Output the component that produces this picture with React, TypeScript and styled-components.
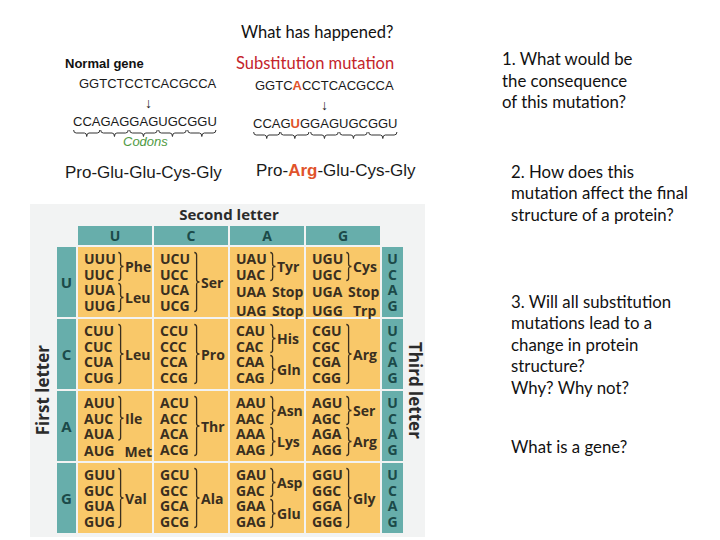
import React from "react";
import styled, { createGlobalStyle } from "styled-components";

const GlobalStyle = createGlobalStyle`
  html, body {
    margin: 0;
    padding: 0;
    background: #ffffff;
  }
  body {
    width: 720px;
    height: 540px;
    overflow: hidden;
    font-family: "Liberation Sans", Arial, sans-serif;
    color: #111;
  }
`;

const LINE = 15.5;
const BASES = ["U", "C", "A", "G"];

// each cell: groups split by "|", codons then ":" amino acid
const CELLS = [
  ["UUU UUC:Phe|UUA UUG:Leu", "UCU UCC UCA UCG:Ser", "UAU UAC:Tyr|UAA:Stop|UAG:Stop", "UGU UGC:Cys|UGA:Stop|UGG:Trp"],
  ["CUU CUC CUA CUG:Leu", "CCU CCC CCA CCG:Pro", "CAU CAC:His|CAA CAG:Gln", "CGU CGC CGA CGG:Arg"],
  ["AUU AUC AUA:Ile|AUG:Met", "ACU ACC ACA ACG:Thr", "AAU AAC:Asn|AAA AAG:Lys", "AGU AGC:Ser|AGA AGG:Arg"],
  ["GUU GUC GUA GUG:Val", "GCU GCC GCA GCG:Ala", "GAU GAC:Asp|GAA GAG:Glu", "GGU GGC GGA GGG:Gly"],
];

const Page = styled.div`
  display: grid;
  grid-template-columns: 502px 1fr;
  height: 540px;
`;

const LeftColumn = styled.div`
  display: flex;
  flex-direction: column;
`;

const Title = styled.div`
  margin: 22px 0 0 241px;
  font-family: Lato, "Open Sans", sans-serif;
  font-size: 16.5px;
  line-height: 20px;
  color: #111;
`;

const GeneRow = styled.div`
  display: flex;
  margin-top: 12px;
`;

const Panel = styled.div<{ $left: number; $width: number }>`
  margin-left: ${(p) => p.$left}px;
  width: ${(p) => p.$width}px;
  display: flex;
  flex-direction: column;
  align-items: flex-start;
`;

const GeneLabel = styled.div`
  font-weight: bold;
  font-size: 13px;
  line-height: 20px;
`;

const MutationLabel = styled.div`
  font-family: Lato, "Open Sans", sans-serif;
  font-size: 16.5px;
  line-height: 18px;
  color: #c4242b;
`;

const Sequence = styled.div<{ $indent: number; $top?: number }>`
  margin: ${(p) => p.$top || 0}px 0 0 ${(p) => p.$indent}px;
  font-size: 13px;
  line-height: 20px;
  color: #1a1a1a;
`;

const Arrow = styled.div<{ $indent: number }>`
  margin-left: ${(p) => p.$indent}px;
  font-size: 14px;
  line-height: 19px;
  color: #222;
`;

const CodonRow = styled.div<{ $indent: number; $top: number }>`
  margin: ${(p) => p.$top}px 0 0 ${(p) => p.$indent}px;
  display: flex;
  font-size: 13px;
  line-height: 16px;
  color: #1a1a1a;
`;

const CodonBox = styled.span`
  position: relative;
  svg {
    position: absolute;
    left: 0;
    top: 100%;
    width: 100%;
    height: 7px;
  }
`;

const CodonsCaption = styled.div<{ $indent: number }>`
  margin: 6px 0 0 ${(p) => p.$indent}px;
  font-size: 13px;
  font-style: italic;
  line-height: 12px;
  color: #4f9a44;
`;

const Protein = styled.div<{ $indent: number; $top: number }>`
  margin: ${(p) => p.$top}px 0 0 ${(p) => p.$indent}px;
  font-size: 17px;
  line-height: 20px;
  color: #1a1a1a;
`;

const Mut = styled.span`
  color: #e1532b;
  font-weight: bold;
`;

const CodeTable = styled.div`
  margin: 21px 0 0 30px;
  width: 395px;
  height: 333px;
  box-sizing: border-box;
  background: #f2f3f3;
  padding-bottom: 4px;
  display: grid;
  grid-template-columns: 25px 19px repeat(4, 74px) 21px 20px;
  grid-template-rows: 20px 19px repeat(4, 70px);
  column-gap: 2px;
  row-gap: 2px;
  font-family: "Open Sans", sans-serif;
  font-weight: 700;
`;

const SecondLetter = styled.div`
  grid-column: 3 / 7;
  grid-row: 1;
  text-align: center;
  font-size: 15px;
  line-height: 20px;
  color: #2b2b2b;
`;

const SideLabel = styled.div<{ $col: number; $flip?: boolean }>`
  grid-column: ${(p) => p.$col};
  grid-row: 3 / 7;
  writing-mode: vertical-rl;
  transform: ${(p) => (p.$flip ? "rotate(180deg)" : "none")};
  align-self: center;
  justify-self: center;
  font-size: 17px;
  line-height: 20px;
  color: #2b2b2b;
`;

const HeaderCell = styled.div<{ $col: number }>`
  grid-column: ${(p) => p.$col};
  grid-row: 2;
  background: #67aeab;
  color: #1b4a49;
  font-size: 14px;
  line-height: 19px;
  text-align: center;
`;

const FirstCell = styled.div<{ $row: number }>`
  grid-column: 2;
  grid-row: ${(p) => p.$row};
  background: #67aeab;
  color: #1b4a49;
  font-size: 15px;
  display: flex;
  align-items: center;
  justify-content: center;
`;

const ThirdCell = styled.div<{ $row: number }>`
  grid-column: 7;
  grid-row: ${(p) => p.$row};
  background: #67aeab;
  color: #1b4a49;
  font-size: 14px;
  line-height: ${LINE}px;
  padding-top: 4px;
  display: flex;
  flex-direction: column;
  align-items: center;
`;

const Cell = styled.div<{ $row: number; $col: number }>`
  grid-column: ${(p) => p.$col};
  grid-row: ${(p) => p.$row};
  background: #f9c869;
  color: #3a2f1f;
  padding: 4px 0 0 6px;
  display: flex;
  flex-direction: column;
`;

const Group = styled.div`
  display: flex;
  align-items: center;
`;

const CodonList = styled.div`
  width: 34px;
  font-size: 14px;
  line-height: ${LINE}px;
`;

const BraceSlot = styled.div<{ $narrow: boolean }>`
  width: ${(p) => (p.$narrow ? 2 : 7)}px;
  display: flex;
  align-items: center;
`;

const AminoName = styled.div`
  font-size: 14px;
  white-space: nowrap;
`;

const Questions = styled.div`
  display: flex;
  flex-direction: column;
  font-family: Lato, "Open Sans", sans-serif;
  font-size: 16.8px;
  line-height: 21.6px;
  color: #111;
`;

const Question = styled.div<{ $top: number; $indent: number }>`
  margin: ${(p) => p.$top}px 0 0 ${(p) => p.$indent}px;
`;

const HBrace = () => (
  <svg viewBox="0 0 30 7" preserveAspectRatio="none">
    <path
      d="M0.7 0 Q0.7 3 3.5 3 L12.5 3 Q15 3 15 6.5 Q15 3 17.5 3 L26.5 3 Q29.3 3 29.3 0"
      fill="none"
      stroke="#333"
      strokeWidth="1"
      vectorEffect="non-scaling-stroke"
    />
  </svg>
);

const VBrace = ({ lines }: { lines: number }) => {
  const h = lines * LINE;
  const m = h / 2;
  return (
    <svg width="6" height={h} viewBox={`0 0 6 ${h}`}>
      <path
        d={`M0.3 1.5 Q2.6 1.5 2.6 4 L2.6 ${m - 2.5} Q2.6 ${m} 5.5 ${m} Q2.6 ${m} 2.6 ${m + 2.5} L2.6 ${h - 4} Q2.6 ${h - 1.5} 0.3 ${h - 1.5}`}
        fill="none"
        stroke="#3a2f1f"
        strokeWidth="1.3"
      />
    </svg>
  );
};

const Codons = ({ codons, mut }: { codons: string[]; mut?: [number, number] }) => (
  <>
    {codons.map((c, i) => (
      <CodonBox key={i}>
        {mut && mut[0] === i
          ? c.split("").map((ch, j) => (j === mut[1] ? <Mut key={j}>{ch}</Mut> : ch))
          : c}
        <HBrace />
      </CodonBox>
    ))}
  </>
);

const TableCell = ({ spec, row, col }: { spec: string; row: number; col: number }) => (
  <Cell $row={row} $col={col}>
    {spec.split("|").map((g, i) => {
      const [list, name] = g.split(":");
      const codons = list.split(" ");
      const single = codons.length === 1;
      return (
        <Group key={i}>
          <CodonList>
            {codons.map((c) => (
              <div key={c}>{c}</div>
            ))}
          </CodonList>
          <BraceSlot $narrow={single && name === "Stop"}>
            {!single && <VBrace lines={codons.length} />}
          </BraceSlot>
          <AminoName>{name}</AminoName>
        </Group>
      );
    })}
  </Cell>
);

export default function App() {
  return (
    <>
      <GlobalStyle />
      <Page>
        <LeftColumn>
          <Title>What has happened?</Title>
          <GeneRow>
            <Panel $left={65} $width={171}>
              <GeneLabel>Normal gene</GeneLabel>
              <Sequence $indent={14}>GGTCTCCTCACGCCA</Sequence>
              <Arrow $indent={80}>↓</Arrow>
              <CodonRow $indent={8} $top={1}>
                <Codons codons={["CCA", "GAG", "GAG", "UGC", "GGU"]} />
              </CodonRow>
              <CodonsCaption $indent={58}>Codons</CodonsCaption>
              <Protein $indent={0} $top={15}>
                Pro-Glu-Glu-Cys-Gly
              </Protein>
            </Panel>
            <Panel $left={0} $width={200}>
              <MutationLabel>Substitution mutation</MutationLabel>
              <Sequence $indent={19} $top={4}>
                GGTC<Mut>A</Mut>CCTCACGCCA
              </Sequence>
              <Arrow $indent={85}>↓</Arrow>
              <CodonRow $indent={17} $top={1}>
                <Codons codons={["CCA", "GUG", "GAG", "UGC", "GGU"]} mut={[1, 1]} />
              </CodonRow>
              <Protein $indent={20} $top={29}>
                Pro-<Mut>Arg</Mut>-Glu-Cys-Gly
              </Protein>
            </Panel>
          </GeneRow>
          <CodeTable>
            <SecondLetter>Second letter</SecondLetter>
            <SideLabel $col={1} $flip>
              First letter
            </SideLabel>
            <SideLabel $col={8}>Third letter</SideLabel>
            {BASES.map((b, i) => (
              <HeaderCell key={b} $col={i + 3}>
                {b}
              </HeaderCell>
            ))}
            {BASES.map((b, r) => (
              <React.Fragment key={b}>
                <FirstCell $row={r + 3}>{b}</FirstCell>
                {CELLS[r].map((spec, c) => (
                  <TableCell key={c} spec={spec} row={r + 3} col={c + 3} />
                ))}
                <ThirdCell $row={r + 3}>
                  {BASES.map((t) => (
                    <span key={t}>{t}</span>
                  ))}
                </ThirdCell>
              </React.Fragment>
            ))}
          </CodeTable>
        </LeftColumn>
        <Questions>
          <Question $top={48} $indent={0}>
            1. What would be
            <br />
            the consequence
            <br />
            of this mutation?
          </Question>
          <Question $top={48} $indent={9}>
            2. How does this
            <br />
            mutation affect the final
            <br />
            structure of a protein?
          </Question>
          <Question $top={65} $indent={9}>
            3. Will all substitution
            <br />
            mutations lead to a
            <br />
            change in protein
            <br />
            structure?
            <br />
            Why? Why not?
          </Question>
          <Question $top={37} $indent={9}>
            What is a gene?
          </Question>
        </Questions>
      </Page>
    </>
  );
}
